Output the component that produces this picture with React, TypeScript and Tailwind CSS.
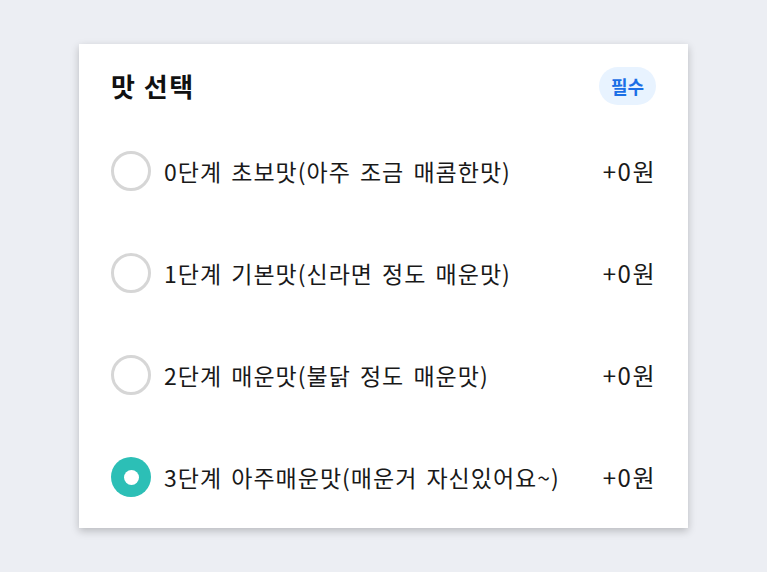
import React from 'react';

const options = [
  { label: '0단계 초보맛(아주 조금 매콤한맛)', price: '+0원' },
  { label: '1단계 기본맛(신라면 정도 매운맛)', price: '+0원' },
  { label: '2단계 매운맛(불닭 정도 매운맛)', price: '+0원' },
  { label: '3단계 아주매운맛(매운거 자신있어요~)', price: '+0원' },
];

const App: React.FC = () => {
  const selected = 3;

  return (
    <div
      className="min-h-[572px] w-full bg-[#eceef3] pt-[44px] pl-[79px]"
      style={{ fontFamily: '"Noto Sans CJK KR", "Noto Sans", sans-serif' }}
    >
      <div className="w-[609px] bg-white px-8 shadow-[0_3px_8px_rgba(0,0,0,0.22)]">
        <div className="flex items-center justify-between pt-[23px]">
          <h2 className="text-[26px] font-bold leading-none tracking-[1.5px] text-[#111111]">맛 선택</h2>
          <span className="flex h-[38px] items-center rounded-full bg-[#e8f3ff] px-[12px] text-[18px] font-bold text-[#1b6fe6]">
            필수
          </span>
        </div>

        <ul className="mt-[15px]">
          {options.map((opt, i) => (
            <li key={i} className="flex h-[102px] items-center">
              {i === selected ? (
                <span className="flex h-10 w-10 items-center justify-center rounded-full bg-[#2cbfb6]">
                  <span className="h-[15px] w-[15px] rounded-full bg-white" />
                </span>
              ) : (
                <span className="h-10 w-10 rounded-full border-[3px] border-[#d6d6d6]" />
              )}
              <span className="ml-[13px] flex-1 text-[23px] tracking-[1px] [word-spacing:3px] text-[#191919]">
                {opt.label}
              </span>
              <span className="text-[24px] tracking-[1.5px] text-[#191919]">{opt.price}</span>
            </li>
          ))}
        </ul>
      </div>
    </div>
  );
};

export default App;
